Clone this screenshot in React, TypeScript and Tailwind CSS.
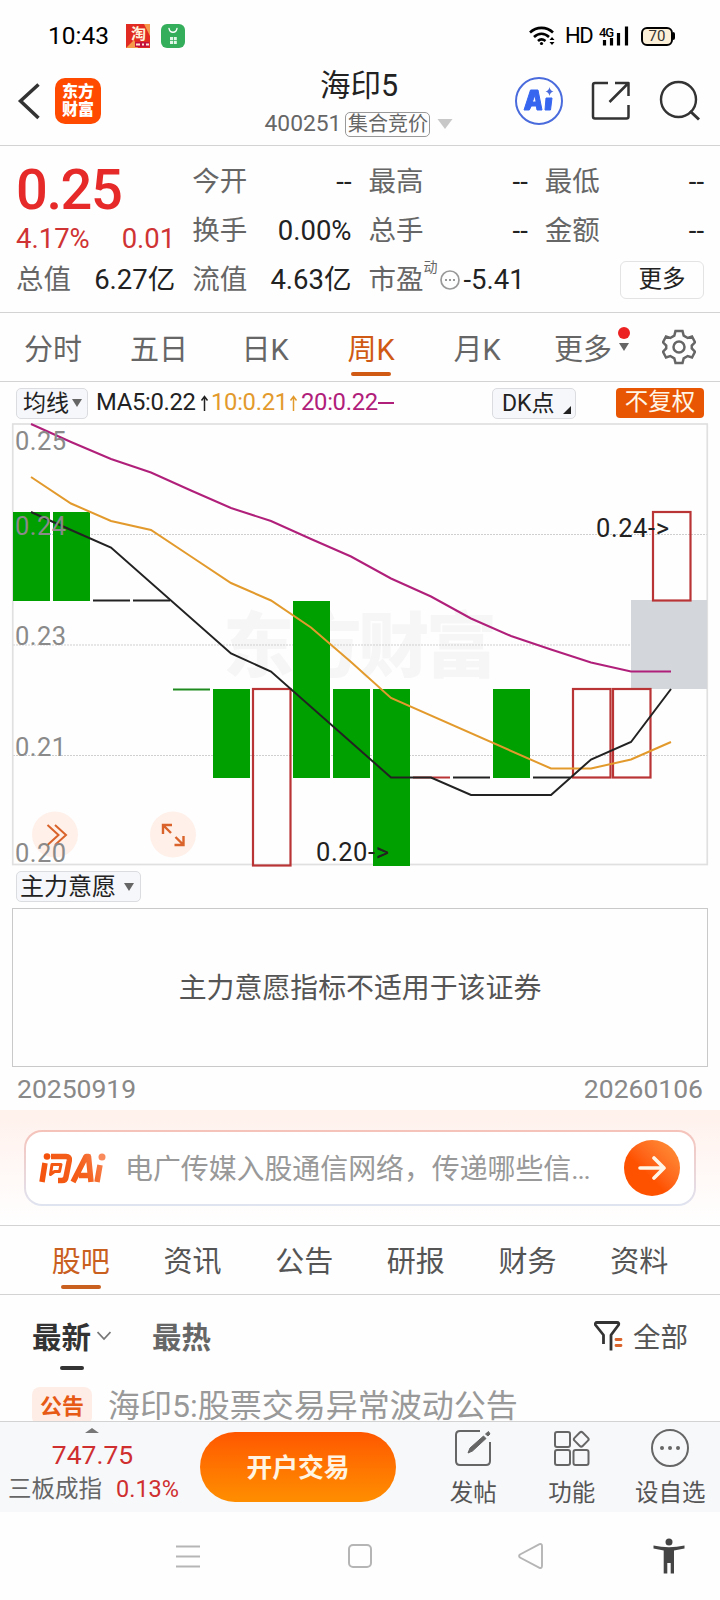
import clsx from "clsx";
import React from "react";

const UP = "#00a000";
const DOWN = "#b93434";
const INK = "#222222";

type CandleKind = "solid" | "hollow" | "flat";

interface Candle {
  kind: CandleKind;
  top: number;
  bottom: number;
  color: string;
}

// one candle per week, 40 units apart
const candles: Candle[] = [
  { kind: "solid", top: 512, bottom: 601, color: UP },
  { kind: "solid", top: 512, bottom: 601, color: UP },
  { kind: "flat", top: 600.5, bottom: 600.5, color: INK },
  { kind: "flat", top: 600.5, bottom: 600.5, color: INK },
  { kind: "flat", top: 689.5, bottom: 689.5, color: "#1f8a1f" },
  { kind: "solid", top: 689, bottom: 778, color: UP },
  { kind: "hollow", top: 689, bottom: 866, color: DOWN },
  { kind: "solid", top: 601, bottom: 778, color: UP },
  { kind: "solid", top: 689, bottom: 778, color: UP },
  { kind: "solid", top: 689, bottom: 866, color: UP },
  { kind: "flat", top: 777.5, bottom: 777.5, color: DOWN },
  { kind: "flat", top: 777.5, bottom: 777.5, color: INK },
  { kind: "solid", top: 689, bottom: 778, color: UP },
  { kind: "flat", top: 777.5, bottom: 777.5, color: INK },
  { kind: "hollow", top: 689, bottom: 778, color: DOWN },
  { kind: "hollow", top: 689, bottom: 778, color: DOWN },
  { kind: "hollow", top: 512, bottom: 601, color: DOWN },
];

const averages = [
  {
    name: "ma20",
    color: "#b0207a",
    points:
      "31,424 71,442 111,459 151,472.5 191,490.5 231,508 271,521 311,539 351,556.5 391,578.5 431,596.5 471,618.5 511,636 551,649.5 591,662.5 631,671.5 671,671.5",
  },
  {
    name: "ma10",
    color: "#e39a2d",
    points: "31,477 71,503.5 111,521 151,530 191,556.5 231,583 271,600.5 311,627.5 351,662 391,698 551,768.5 591,768.5 631,759.5 671,742",
  },
  {
    name: "ma5",
    color: INK,
    points: "31,512 71,530 111,547.5 231,653.5 271,671.5 391,777.5 431,777.5 471,795 551,795 591,759.5 631,742 671,689",
  },
];

const axisLabels = [
  { value: "0.25", y: 450 },
  { value: "0.24", y: 535 },
  { value: "0.23", y: 645 },
  { value: "0.21", y: 756 },
  { value: "0.20", y: 862 },
];

const CandleShape = ({ candle, index }: { candle: Candle; index: number }) => {
  const x = 13 + index * 40;
  const { kind, top, bottom, color } = candle;
  if (kind === "flat") return <path d={`M${x} ${top}h37`} stroke={color} strokeWidth="2.200" />;
  if (kind === "hollow") {
    return <rect x={x} y={top} width="37.5" height={bottom - top - 0.5} fill="none" stroke={color} strokeWidth="2.200" />;
  }
  return <rect x={x} y={top} width="37" height={bottom - top} fill={color} />;
};

const KLineChart = () => (
  <svg className="block h-[445px] w-[720px]" viewBox="0 422 720 445">
    <text
      x="360"
      y="671"
      textAnchor="middle"
      fontSize="71"
      fontWeight="900"
      fill="#f6f6f6"
      fontFamily="'Noto Sans CJK SC', sans-serif"
      textLength="274"
    >
      东方财富
    </text>
    <path d="M13 534.5H707M13 645H707M13 755.5H707" stroke="#cfcfcf" strokeDasharray="2 1" strokeWidth="1" />
    <rect x="12.75" y="424" width="694.5" height="440.5" fill="none" stroke="#e0e0e0" strokeWidth="1.7" />
    <rect x="631" y="600" width="76" height="89" fill="#d3d6db" />
    {candles.map((candle, index) => (
      <CandleShape key={index} candle={candle} index={index} />
    ))}
    {averages.map(({ name, color, points }) => (
      <polyline key={name} points={points} fill="none" stroke={color} strokeWidth="2" />
    ))}
    <circle cx="55" cy="834.5" r="23" fill="#fff0e9" />
    <path d="M47.5 825l11 10-11 10M55 825l11 10-11 10" fill="none" stroke="#d9632a" strokeWidth="2" />
    <circle cx="173" cy="834.5" r="23" fill="#fff0e9" />
    <path d="M172 825h-9v9M163 825l8 8M174.500 845h9v-9M183.500 845l-8-8" fill="none" stroke="#d9632a" strokeWidth="2.400" />
    <g fontFamily="Roboto, sans-serif" fontSize="25.500">
      {axisLabels.map(({ value, y }) => (
        <text key={value} x="15" y={y} fill="#8a8a8a" textLength="51">
          {value}
        </text>
      ))}
      <text x="596" y="537" fill={INK} textLength="73">
        0.24-&gt;
      </text>
      <text x="316" y="861" fill={INK} textLength="73">
        0.20-&gt;
      </text>
    </g>
  </svg>
);

const StatusBar = () => (
  <div className="flex h-[72px] items-center pl-[48px] pr-[45px] text-black">
    <span className="w-[78px] text-[24.500px] leading-none">10:43</span>
    <svg className="h-6 w-6" viewBox="0 0 24 24">
      <rect width="24" height="24" fill="#e02a22" />
      <path d="M18 0h6v12zM0 24l8-8 4 8z" fill="#f59a4a" />
      <text x="12.500" y="14.500" textAnchor="middle" fontSize="15" fill="#fff3dc" fontFamily="'Noto Sans CJK SC', sans-serif" fontWeight="700">
        淘
      </text>
      <rect x="9" y="18" width="14" height="5" fill="#c30f3d" />
      <path d="M10 20.500h4M16 20.500h2M20 20.500h3" stroke="#ffe5d8" strokeWidth="2" />
    </svg>
    <svg className="ml-[11px] h-6 w-6" viewBox="0 0 24 24" fill="none">
      <rect width="24" height="24" rx="6" fill="#35ae5c" />
      <path d="M8 4.500c1 5 7 5 8 0" stroke="#fff" strokeWidth="1.300" strokeLinecap="round" />
      <path d="M10.500 13v7M14.300 13v7" stroke="#e3f7e8" strokeWidth="3" />
      <path d="M8.500 16.500h8" stroke="#35ae5c" strokeWidth="0.800" />
    </svg>
    <svg className="ml-auto h-5 w-[27px]" viewBox="0 0 27 20" fill="none" stroke="#000" strokeWidth="2.600">
      <path d="M1 6.500C7.500.3 17.500.3 24 6.500M5 11c4.500-4.300 10.500-4.300 15 0" />
      <path d="M9 15c2-2 5-2 7.500 0" />
      <circle cx="12.500" cy="17.500" r="1.600" fill="#000" stroke="none" />
      <path d="M20.500 14l2.500-3 2.500 3zM20.500 16l2.500 3 2.500-3z" fill="#000" stroke="none" />
    </svg>
    <span className="ml-[9px] w-[27px] text-[22px] leading-none tracking-[-1.500px]">HD</span>
    <svg className="ml-[7px] h-[22px] w-[30px]" viewBox="0 0 30 22">
      <text x="0" y="11.500" fontSize="13" fontFamily="Roboto, sans-serif" fontWeight="500" textLength="15">
        4G
      </text>
      <path d="M5.500 15v5.500M12.500 13v7.500M19.500 8v12.500M27.500 1.500v19" stroke="#000" strokeWidth="3.200" />
    </svg>
    <div className="ml-[12px] flex h-[19px] w-[32px] items-center justify-center rounded-[6px] border-2 border-black bg-[#fdf0d8] text-[15px] leading-none text-[#333]">
      70
    </div>
    <div className="h-2 w-[2px] rounded-r bg-black" />
  </div>
);

const Header = () => (
  <header className="flex h-[74px] items-start border-b border-[#d3d3d3]">
    <svg className="ml-[17px] mt-[10px] h-[38px] w-[24px]" viewBox="0 0 24 38" fill="none">
      <path d="M21.500 2.500L3.500 19l18 17" stroke="#333" strokeWidth="3.500" />
    </svg>
    <div className="ml-[14px] mt-[6px] flex h-[46px] w-[46px] flex-col items-center justify-center rounded-[10px] bg-[#ff4a00] text-[16px] font-black leading-[18.500px] text-white">
      <span>东方</span>
      <span>财富</span>
    </div>
    <div className="ml-[163px] flex w-[190px] flex-col items-center">
      <div className="mt-[-3px] h-[41px] text-[30.500px] leading-[34px] text-[#222]">海印5</div>
      <div className="flex h-7 items-center text-[22.800px] text-[#666]">
        <span>400251</span>
        <span className="ml-[4px] flex h-[25px] w-[85px] items-center justify-center rounded-[5px] border border-[#999] text-[20px] leading-none">
          集合竞价
        </span>
        <svg className="ml-[7px] h-[10px] w-[16px]" viewBox="0 0 16 10">
          <path d="M.5 0h15L8 10z" fill="#c8c8c8" />
        </svg>
      </div>
    </div>
    <svg className="ml-[60px] mt-[4px] h-[50px] w-[50px]" viewBox="0 0 50 50">
      <circle cx="25" cy="25" r="23" fill="none" stroke="#4a6bdc" strokeWidth="2" />
      <path
        d="M16.500 14h7.500l4 20h-5l-.7-4h-5l-2 4H10zM21 19l-2.700 7h3.800zM32 22h6l-1.500 12h-5.500z"
        fill="#3666f0"
        fillRule="evenodd"
        stroke="#3666f0"
        strokeLinejoin="round"
      />
      <path d="M35.500 11q.7 3.800 4 4.500-3.300.7-4 4.500-.7-3.800-4-4.500 3.300-.7 4-4.500z" fill="#4a6bdc" />
    </svg>
    <svg className="ml-[27px] mt-[9px] h-[40px] w-[40px]" viewBox="0 0 40 40" fill="none" stroke="#333" strokeWidth="2.500">
      <path d="M17 2H4Q2 2 2 4v31.500q0 2 2 2h31.500q2 0 2-2V24M24 2h13.500v13M37.500 2L18.500 21" strokeLinejoin="round" />
    </svg>
    <svg className="ml-[28px] mt-[8px] h-[42px] w-[42px]" viewBox="0 0 42 42" fill="none" stroke="#333" strokeWidth="2.400">
      <circle cx="19.500" cy="19.500" r="17.500" />
      <path d="M31 31l9 8.500" strokeWidth="3" />
    </svg>
  </header>
);

interface StatProps {
  label: string;
  value: string;
}

const Stat = ({ label, value }: StatProps) => (
  <div className="flex items-center justify-between text-[27.500px] leading-none">
    <span className="text-[#666]">{label}</span>
    <span className="text-[#222]">{value}</span>
  </div>
);

const Quote = () => (
  <section className="grid h-[167px] grid-cols-4 grid-rows-[49px_50px_48px] gap-x-[17px] border-b border-[#d3d3d3] pl-[16px] pr-[16px] pt-[11px]">
    <div className="row-span-2 text-[#e62a2a]">
      <div className="h-[63px] pt-px text-[56px] font-medium leading-[64px] tracking-[-1.400px]">0.25</div>
      <div className="flex justify-between text-[27.500px] leading-[38px] text-[#cf3333]">
        <span>4.17%</span>
        <span>0.01</span>
      </div>
    </div>
    <Stat label="今开" value="--" />
    <Stat label="最高" value="--" />
    <Stat label="最低" value="--" />
    <Stat label="换手" value="0.00%" />
    <Stat label="总手" value="--" />
    <Stat label="金额" value="--" />
    <Stat label="总值" value="6.27亿" />
    <Stat label="流值" value="4.63亿" />
    <div className="flex items-center text-[27.500px] leading-none text-[#222]">
      <span className="text-[#666]">市盈</span>
      <span className="h-[40px] w-[15px] text-[14px] leading-[14px] text-[#666]">动</span>
      <svg className="ml-px h-5 w-5" viewBox="0 0 20 20" fill="none" stroke="#999">
        <circle cx="10" cy="10" r="9" strokeWidth="1.700" />
        <path d="M5 10h2M9 10h2M13 10h2" strokeWidth="2" />
      </svg>
      <span className="ml-[4px]">-5.41</span>
    </div>
    <button className="ml-auto flex h-[38px] w-[84px] items-center justify-center self-center rounded-[6px] border-[1.500px] border-[#e3e3e3] text-[23.500px] leading-none text-[#222]">
      更多
    </button>
  </section>
);

const periods = ["分时", "五日", "日K", "周K", "月K", "更多"];

const PeriodTabs = () => (
  <nav className="flex h-[69px] border-b border-[#d3d3d3] text-[29px] text-[#666]">
    {periods.map((period) => {
      const active = period === "周K";
      return (
        <div
          key={period}
          className={clsx("relative flex w-[106px] items-center justify-center pt-[7px]", active && "text-[#d05a14]")}
        >
          {period}
          {active && <i className="absolute bottom-[5px] left-[33px] h-1 w-10 rounded-full bg-[#d05a14]" />}
          {period === "更多" && (
            <svg className="absolute left-[88px] top-[14px] h-6 w-3" viewBox="0 0 12 24">
              <circle cx="6" cy="6" r="6" fill="#ec2222" />
              <path d="M1 16h10l-5 8z" fill="#666" />
            </svg>
          )}
        </div>
      );
    })}
    <svg className="ml-[26px] mt-[16px] h-[36px] w-[34px]" viewBox="0 0 34 36" fill="none" stroke="#666" strokeWidth="2.500">
      <path d="M13.500 2h7l1.200 4.700 4 2.300 4.300-1.500 3 5.800-3.200 3.200v3l3.200 3.200-3 5.800-4.300-1.500-4 2.300-1.200 4.700h-7l-1.200-4.700-4-2.300L4 28.500l-3-5.800 3.200-3.200v-3L1 13.300l3-5.800L8.300 9l4-2.300z" />
      <circle cx="17" cy="18" r="5.500" />
    </svg>
  </nav>
);

const Trend = ({ color }: { color: string }) => (
  <svg className="h-[16px] w-[14px]" viewBox="0 0 14 16" fill="none" stroke={color} strokeWidth="1.500">
    <path d="M6.500 16V2M3.500 5.500l3-4 3 4" />
  </svg>
);

const IndicatorBar = () => (
  <div className="flex h-[40px] items-center pl-[16px] pr-[16px] pt-[2px] text-[23.800px] leading-none text-[#222]">
    <div className="flex h-[31px] w-[72px] items-center rounded-[5px] border border-[#dadce0] bg-[#f6f7fa] pl-[6px] text-[23px]">
      均线
      <svg className="ml-[3px] h-2 w-[10px]" viewBox="0 0 10 8">
        <path d="M0 0h10L5 8z" fill="#666" />
      </svg>
    </div>
    <span className="ml-[8px] w-[102px] tracking-[-0.300px]">MA5:0.22</span>
    <Trend color="#222222" />
    <span className="ml-[-1px] w-[76px] tracking-[-0.300px] text-[#e39a2d]">10:0.21</span>
    <Trend color="#e39a2d" />
    <span className="w-[77px] tracking-[-0.300px] text-[#b0207a]">20:0.22</span>
    <svg className="h-[2px] w-4" viewBox="0 0 16 2">
      <path d="M0 1h16" stroke="#b0207a" strokeWidth="2" />
    </svg>
    <div className="ml-auto mr-[40px] flex h-[31px] w-[84px] items-center rounded-[5px] border border-[#dadce0] bg-[#f6f7fa] pl-[9px] text-[23px]">
      DK点
      <svg className="ml-[8px] mt-[14px] h-2 w-2" viewBox="0 0 8 8">
        <path d="M8 0v8H0z" fill="#222" />
      </svg>
    </div>
    <div className="flex h-[30px] w-[88px] items-center justify-center rounded-[4px] bg-[#e85503] text-[23.500px] text-[#fff5e6]">
      不复权
    </div>
  </div>
);

const IntentPanel = () => (
  <section className="px-[12px] pt-[4px]">
    <div className="ml-[4px] flex h-[31px] w-[125px] items-center rounded-[5px] border border-[#dadce0] bg-[#f6f7fa] pl-[3px] pt-px text-[24px] leading-none text-[#222]">
      主力意愿
      <svg className="ml-[8px] h-2 w-[10px]" viewBox="0 0 10 8">
        <path d="M0 0h10L5 8z" fill="#666" />
      </svg>
    </div>
    <div className="mt-[6px] flex h-[159px] w-[696px] items-center justify-center border border-[#c9c9c9] pt-[2px] text-[27.900px] text-[#555]">
      主力意愿指标不适用于该证券
    </div>
    <div className="flex h-[43px] items-center justify-between px-[5px] text-[26.500px] text-[#888]">
      <span>20250919</span>
      <span>20260106</span>
    </div>
  </section>
);

const AskAi = () => (
  <section className="h-[116px] border-b border-[#d3d3d3] bg-linear-to-b from-[#fff1ec] to-white px-6 pt-5">
    <div className="h-[76px] rounded-[18px] bg-linear-to-b from-[#f5c2b9] to-[#dfe4f1] p-[2px]">
      <div className="flex h-full items-center rounded-[16px] bg-white pl-[13px] pr-[14px]">
        <svg className="h-[32px] w-[68px]" viewBox="0 0 68 32">
          <defs>
            <linearGradient id="ask" gradientUnits="userSpaceOnUse" x1="0" y1="32" x2="68" y2="0">
              <stop offset="0" stopColor="#f4520c" />
              <stop offset="0.600" stopColor="#f4601c" />
              <stop offset="1" stopColor="#f98a5c" />
            </linearGradient>
          </defs>
          <g fill="none" stroke="url(#ask)" strokeWidth="5.500" strokeLinejoin="round">
            <path d="M6 11L3 30M12 4.500h15q4 0 3.300 4L27 25q-.5 3.500-4 3.500h-4" />
            <path d="M13 12.500h9l-1.500 7h-5l-4 3z" strokeWidth="3" />
            <path d="M34 30L47 4.500h2.500L52 30M40 23.500h11M61 13L58 30" />
          </g>
          <circle cx="8" cy="4.500" r="3.300" fill="#f4520c" />
          <circle cx="63" cy="5" r="3.500" fill="#f98a5c" />
        </svg>
        <span className="ml-[18px] whitespace-nowrap pt-[4px] text-[27.900px] text-[#999]">
          电广传媒入股通信网络，传递哪些信<span className="tracking-[-1.200px]">...</span>
        </span>
        <div className="ml-auto flex h-14 w-14 items-center justify-center rounded-full bg-linear-to-tr from-[#ff5200] from-40% to-[#ff943c]">
          <svg className="h-6 w-7" viewBox="0 0 28 24" fill="none" stroke="#fff6e8" strokeWidth="3.600" strokeLinecap="round" strokeLinejoin="round">
            <path d="M2 12h24M16 2l10 10-10 10" />
          </svg>
        </div>
      </div>
    </div>
  </section>
);

const sections = ["股吧", "资讯", "公告", "研报", "财务", "资料"];

const SectionTabs = () => (
  <nav className="flex h-[69px] border-b border-[#d3d3d3] pl-[25px] pr-[25px] text-[29px] text-[#555]">
    {sections.map((section, index) => (
      <div
        key={section}
        className={clsx("relative flex flex-1 items-center justify-center pt-[6px]", index === 0 && "text-[#c9601f]")}
      >
        {section}
        {index === 0 && <i className="absolute bottom-[5px] left-[36px] h-1 w-10 rounded-full bg-[#c9601f]" />}
      </div>
    ))}
  </nav>
);

const Feed = () => (
  <section className="h-[126px] overflow-hidden pl-8">
    <div className="flex h-[92px] items-start pr-[32px] pt-[22px] text-[29.500px] leading-[42px]">
      <div className="relative font-bold text-[#333]">
        最新
        <i className="absolute left-[28px] top-[49px] h-1 w-6 rounded-full bg-[#333]" />
      </div>
      <svg className="ml-[6px] mt-[14px] h-[10px] w-[14px]" viewBox="0 0 14 10" fill="none">
        <path d="M.5 1L7 8l6.500-7" stroke="#777" strokeWidth="1.800" />
      </svg>
      <div className="ml-[41px] font-bold text-[#666]">最热</div>
      <svg className="ml-auto mt-[4px] h-[31px] w-[29px]" viewBox="0 0 29 31" fill="none">
        <path
          d="M9.500 23V14L1.500 4Q.8 1.500 3 1.500h20q2.500 0 1.500 2.500L17 14v15.500"
          stroke="#333"
          strokeWidth="2.800"
          strokeLinejoin="round"
        />
        <path d="M22 18.500h5M22 24.500h5" stroke="#d9632a" strokeWidth="2.800" strokeLinecap="round" />
      </svg>
      <div className="ml-[10px] text-[27.500px] text-[#555]">全部</div>
    </div>
    <div className="flex items-start">
      <div className="flex h-[38px] w-[60px] items-center justify-center rounded-[8px] bg-[#feede6] pt-px text-[22px] font-bold leading-none text-[#e65a16]">
        公告
      </div>
      <div className="ml-[16px] pt-px text-[32px] leading-[37px] text-[#999]">海印5:股票交易异常波动公告</div>
    </div>
  </section>
);

interface ActionProps {
  label: string;
  children: React.ReactNode;
}

const Action = ({ label, children }: ActionProps) => (
  <div className="flex w-[98.500px] flex-col items-center pt-[7px] text-[23.500px] leading-none text-[#555]">
    <svg className="h-[38px] w-[38px]" viewBox="0 0 38 38" fill="none" stroke="#666" strokeWidth="2">
      {children}
    </svg>
    <span className="mt-[15px]">{label}</span>
  </div>
);

const BottomBar = () => (
  <footer className="flex h-[91px] border-t border-[#d3d3d3] bg-[#f7f8fa]">
    <div className="w-[200px] pt-[6px]">
      <svg className="ml-[85px] h-[5px] w-[14px]" viewBox="0 0 14 5">
        <path d="M0 5l7-5 7 5z" fill="#777" />
      </svg>
      <div className="pr-[15px] pt-px text-center text-[26.500px] leading-[42px] text-[#cf2f2f]">747.75</div>
      <div className="flex pl-[8px] text-[23.500px] leading-[26px] text-[#666]">
        三板成指<span className="ml-[14px] text-[#cf2f2f]">0.13%</span>
      </div>
    </div>
    <button className="mt-[10px] flex h-[70px] w-[196px] items-center justify-center rounded-full bg-linear-to-b from-[#ff5600] to-[#ff8e00] pt-[3px] text-[25.800px] font-bold text-[#fff5e2]">
      开户交易
    </button>
    <div className="ml-[28px] flex">
      <Action label="发帖">
        <path d="M26 2H6Q2 2 2 6v26q0 4 4 4h26q4 0 4-4V13" />
        <path d="M14 24l2-5L29.500 7l2.500 2.500L18.500 22zM31.500 5l3-2.500L36 5l-2 2z" fill="#666" strokeWidth="1" />
      </Action>
      <Action label="功能">
        <rect x="2" y="3" width="15" height="15" rx="2" />
        <rect x="2" y="21" width="15" height="15" rx="2" />
        <rect x="20.500" y="21" width="15" height="15" rx="2" />
        <rect x="22.500" y="4.500" width="11.500" height="11.500" rx="2" transform="rotate(45 28.250 10.250)" />
      </Action>
      <Action label="设自选">
        <circle cx="19" cy="19" r="18" />
        <path d="M11 19h.01M19 19h.01M27 19h.01" strokeWidth="4" strokeLinecap="round" />
      </Action>
    </div>
  </footer>
);

const SystemNav = () => (
  <div className="flex h-[88px] items-start bg-[#fefefe]">
    <svg className="ml-[176px] mt-[33px] h-6 w-6" viewBox="0 0 24 24" stroke="#b5b5b5" strokeWidth="2">
      <path d="M0 1.500h24M0 11.500h24M0 21.500h24" />
    </svg>
    <div className="ml-[148px] mt-8 h-6 w-6 rounded-[5px] border-2 border-[#b5b5b5]" />
    <svg className="ml-[146px] mt-[31px] h-[26px] w-[26px]" viewBox="0 0 26 26" fill="none">
      <path d="M2 11.500L21.500 1.200q2.500-.8 2.500 2v19.600q0 2.800-2.500 2L2 14.500q-1.800-1.500 0-3z" stroke="#b5b5b5" strokeWidth="1.900" />
    </svg>
    <svg className="ml-[109px] mt-[26px] h-9 w-8" viewBox="0 0 32 36" fill="#444">
      <circle cx="16" cy="4" r="3.500" />
      <path d="M.5 7.500Q16 11 31.500 7.500V10.500L21 12.500V35.500H17.700V25H14.300V35.500H10.700V12.500L.5 10.500z" />
    </svg>
  </div>
);

const App = () => (
  <div className="h-[1600px] w-[720px] overflow-hidden bg-[#fefefe] font-[Roboto,'Noto_Sans_CJK_SC',sans-serif]">
    <StatusBar />
    <Header />
    <Quote />
    <PeriodTabs />
    <IndicatorBar />
    <KLineChart />
    <IntentPanel />
    <AskAi />
    <SectionTabs />
    <Feed />
    <BottomBar />
    <SystemNav />
  </div>
);

export default App;
